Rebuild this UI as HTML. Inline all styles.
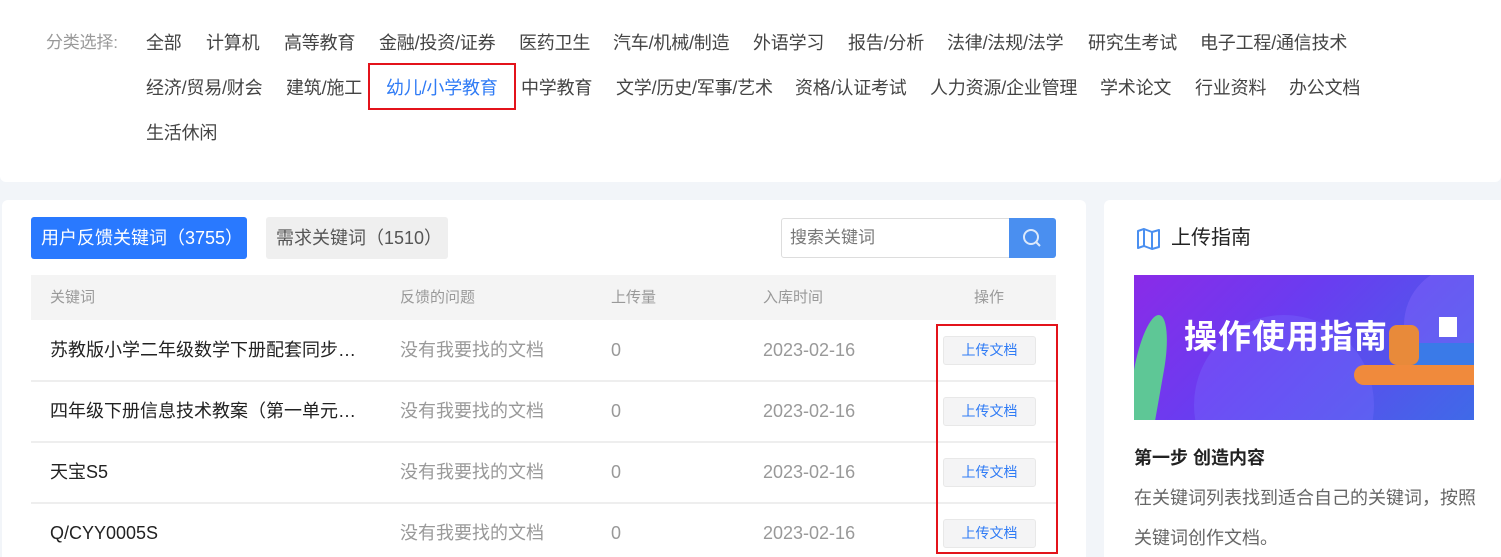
<!DOCTYPE html>
<html><head><meta charset="utf-8"><style>
*{margin:0;padding:0;box-sizing:border-box}
html,body{width:1501px;height:557px;overflow:hidden}
body{background:#f2f5f9;font-family:"Liberation Sans","Noto Sans CJK SC",sans-serif;position:relative}
.a{position:absolute;white-space:nowrap}
.c{font-size:18px;color:#444;line-height:24px;letter-spacing:-0.2px}
.h{font-size:15px;color:#999;line-height:20px}
.k{font-size:18px;color:#222;line-height:24px}
.g{font-size:18px;color:#999;line-height:24px}
.btn{position:absolute;width:93px;height:29px;background:#f4f4f5;border:1px solid #e8e8e8;border-radius:3px;color:#2f7bf5;font-size:14px;text-align:center;line-height:27px}
.sep{position:absolute;left:31px;width:1025px;height:2px;background:#eee}
</style></head><body>
<div class="a" style="left:0;top:0;width:1501px;height:182px;background:#fff;border-radius:0 0 6px 6px"></div>
<div class="a c" style="left:46px;top:31px;color:#999;font-size:17px">分类选择:</div>
<div class="a c" style="left:146px;top:31px">全部</div>
<div class="a c" style="left:206px;top:31px">计算机</div>
<div class="a c" style="left:284px;top:31px">高等教育</div>
<div class="a c" style="left:379px;top:31px">金融/投资/证券</div>
<div class="a c" style="left:519px;top:31px">医药卫生</div>
<div class="a c" style="left:613px;top:31px">汽车/机械/制造</div>
<div class="a c" style="left:753px;top:31px">外语学习</div>
<div class="a c" style="left:848px;top:31px">报告/分析</div>
<div class="a c" style="left:947px;top:31px">法律/法规/法学</div>
<div class="a c" style="left:1088px;top:31px">研究生考试</div>
<div class="a c" style="left:1200px;top:31px">电子工程/通信技术</div>
<div class="a c" style="left:146px;top:76px">经济/贸易/财会</div>
<div class="a c" style="left:286px;top:76px">建筑/施工</div>
<div class="a" style="left:368px;top:63px;width:148px;height:47px;border:2px solid #e3131b"></div>
<div class="a c" style="left:386px;top:76px;color:#2f7bf5">幼儿/小学教育</div>
<div class="a c" style="left:521px;top:76px">中学教育</div>
<div class="a c" style="left:616px;top:76px">文学/历史/军事/艺术</div>
<div class="a c" style="left:795px;top:76px">资格/认证考试</div>
<div class="a c" style="left:930px;top:76px">人力资源/企业管理</div>
<div class="a c" style="left:1100px;top:76px">学术论文</div>
<div class="a c" style="left:1195px;top:76px">行业资料</div>
<div class="a c" style="left:1289px;top:76px">办公文档</div>
<div class="a c" style="left:146px;top:121px">生活休闲</div>

<div class="a" style="left:2px;top:200px;width:1084px;height:380px;background:#fff;border-radius:6px"></div>
<div class="a" style="left:31px;top:217px;width:216px;height:42px;background:#2979ff;border-radius:3px;color:#fff;font-size:18px;line-height:42px;padding-left:10px">用户反馈关键词（3755）</div>
<div class="a" style="left:266px;top:217px;width:182px;height:42px;background:#efefef;border-radius:3px;color:#555;font-size:18px;line-height:42px;padding-left:10px">需求关键词（1510）</div>
<div class="a" style="left:781px;top:218px;width:230px;height:40px;border:1px solid #ddd;border-radius:3px 0 0 3px;color:#777;font-size:17px;line-height:38px;padding-left:8px">搜索关键词</div>
<div class="a" style="left:1009px;top:218px;width:47px;height:40px;background:#4a8ff0;border-radius:0 3px 3px 0">
<svg width="47" height="40"><circle cx="22" cy="19" r="7" fill="none" stroke="#dce9fb" stroke-width="2"/><line x1="27" y1="24" x2="31" y2="28" stroke="#dce9fb" stroke-width="2"/></svg></div>
<div class="a" style="left:31px;top:275px;width:1025px;height:45px;background:#f4f4f4"></div>
<div class="a h" style="left:50px;top:288px">关键词</div>
<div class="a h" style="left:400px;top:288px">反馈的问题</div>
<div class="a h" style="left:611px;top:288px">上传量</div>
<div class="a h" style="left:763px;top:288px">入库时间</div>
<div class="a h" style="left:974px;top:288px">操作</div>

<div class="a k" style="left:50px;top:338px">苏教版小学二年级数学下册配套同步…</div>
<div class="a k" style="left:50px;top:399px">四年级下册信息技术教案（第一单元…</div>
<div class="a k" style="left:50px;top:460px">天宝S5</div>
<div class="a k" style="left:50px;top:521px">Q/CYY0005S</div>
<div class="sep" style="top:380px"></div><div class="sep" style="top:441px"></div><div class="sep" style="top:502px"></div>
<div class="a g" style="left:400px;top:338px">没有我要找的文档</div>
<div class="a g" style="left:400px;top:399px">没有我要找的文档</div>
<div class="a g" style="left:400px;top:460px">没有我要找的文档</div>
<div class="a g" style="left:400px;top:521px">没有我要找的文档</div>
<div class="a g" style="left:611px;top:338px">0</div><div class="a g" style="left:611px;top:399px">0</div><div class="a g" style="left:611px;top:460px">0</div><div class="a g" style="left:611px;top:521px">0</div>
<div class="a g" style="left:763px;top:338px">2023-02-16</div><div class="a g" style="left:763px;top:399px">2023-02-16</div><div class="a g" style="left:763px;top:460px">2023-02-16</div><div class="a g" style="left:763px;top:521px">2023-02-16</div>
<div class="btn" style="left:943px;top:336px">上传文档</div>
<div class="btn" style="left:943px;top:397px">上传文档</div>
<div class="btn" style="left:943px;top:458px">上传文档</div>
<div class="btn" style="left:943px;top:519px">上传文档</div>
<div class="a" style="left:936px;top:324px;width:122px;height:230px;border:2px solid #e3131b"></div>

<div class="a" style="left:1104px;top:200px;width:420px;height:380px;background:#fff;border-radius:6px"></div>
<svg class="a" style="left:1136px;top:227px" width="26" height="24"><path d="M2 4 L8 2 L16 5 L23 3 L23 20 L16 22 L8 19 L2 21 Z M8 2 V19 M16 5 V22" fill="none" stroke="#4a8ff0" stroke-width="2" stroke-linejoin="round"/></svg>
<div class="a" style="left:1171px;top:225px;font-size:20px;color:#222;line-height:26px">上传指南</div>
<div class="a" style="left:1134px;top:275px;width:340px;height:145px;background:linear-gradient(135deg,#8a2be8 0%,#6a3cf0 40%,#3f6ae8 100%);overflow:hidden">
<div class="a" style="left:60px;top:40px;width:180px;height:180px;border-radius:50%;background:rgba(120,110,255,.35)"></div>
<div class="a" style="left:270px;top:-10px;width:120px;height:120px;border-radius:50%;background:rgba(140,110,255,.35)"></div>
<div class="a" style="left:50px;top:42px;font-size:33px;font-weight:bold;color:#fff;letter-spacing:1px;line-height:40px">操作使用指南</div>
<div class="a" style="left:0;top:40px;width:30px;height:110px;background:#5ec796;border-radius:50% 50% 0 0;transform:skew(-10deg)"></div>
<div class="a" style="left:220px;top:90px;width:130px;height:20px;background:#f08a3c;border-radius:10px"></div>
<div class="a" style="left:270px;top:68px;width:80px;height:22px;background:#3a7ae8;border-radius:10px"></div>
<div class="a" style="left:255px;top:50px;width:30px;height:40px;background:#e88a3a;border-radius:8px"></div>
<div class="a" style="left:305px;top:42px;width:18px;height:20px;background:#fff"></div>
</div>
<div class="a" style="left:1134px;top:446px;font-size:18px;font-weight:bold;color:#222;line-height:24px">第一步 创造内容</div>
<div class="a" style="left:1134px;top:478px;font-size:18px;color:#666;line-height:40px">在关键词列表找到适合自己的关键词，按照<br>关键词创作文档。</div>
</body></html>
